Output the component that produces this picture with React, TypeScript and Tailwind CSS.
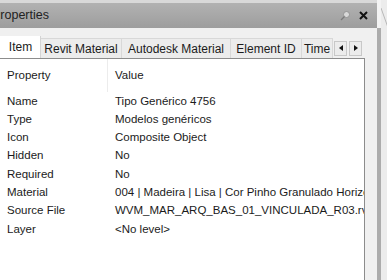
import React from "react";

const rows: [string, string][] = [
  ["Name", "Tipo Genérico 4756"],
  ["Type", "Modelos genéricos"],
  ["Icon", "Composite Object"],
  ["Hidden", "No"],
  ["Required", "No"],
  ["Material", "004 | Madeira | Lisa | Cor Pinho Granulado Horizontal"],
  ["Source File", "WVM_MAR_ARQ_BAS_01_VINCULADA_R03.rvt"],
  ["Layer", "<No level>"],
];

const tabs = [
  { label: "Item", w: "w-[42px]", selected: true },
  { label: "Revit Material", w: "w-[81px]" },
  { label: "Autodesk Material", w: "w-[109px]" },
  { label: "Element ID", w: "w-[71px]" },
  { label: "Time", w: "w-[31px]" },
];

export default function App() {
  return (
    <div
      className="w-[387px] h-[280px] overflow-hidden flex bg-[#f3f3f3] text-[#1b1b1b]"
      style={{ fontFamily: '"Liberation Sans", Arial, sans-serif' }}
    >
      <div className="w-[377px] min-w-0 flex flex-col shrink-0 overflow-hidden">
        <div className="h-[3px] bg-[#d9d9d9]" />
        <div className="h-[25px] flex items-center bg-gradient-to-b from-[#b2b2b2] to-[#9d9d9d] pr-[9px]">
          <span className="ml-[-8px] text-[12.5px] text-[#222]">Properties</span>
          <div className="flex-1" />
          <svg width="10" height="10" viewBox="0 0 10 10" className="mr-[9px]">
            <circle cx="6.5" cy="3.5" r="3" fill="#d8d8d8" stroke="#8a8a8a" strokeWidth="0.8" />
            <line x1="4.5" y1="5.5" x2="1" y2="9" stroke="#7a7a7a" strokeWidth="1.2" />
          </svg>
          <svg width="9" height="9" viewBox="0 0 9 9">
            <path d="M1 1L8 8M8 1L1 8" stroke="#111" strokeWidth="2" />
          </svg>
        </div>
        <div className="flex-1 min-h-0 flex bg-[#f0f0f0]">
          <div className="flex-1 min-w-0 flex flex-col pt-[8px]">
            <div className="h-[22px] flex items-end mr-[10px]">
              {tabs.map((t) => (
                <div
                  key={t.label}
                  className={
                    t.selected
                      ? `${t.w} h-[22px] bg-white border-r border-[#d4d4d4] ml-[-1px] flex items-center justify-center pl-[2px] text-[12px] shrink-0`
                      : `${t.w} h-[20px] bg-[#ececec] border-t border-r border-[#d8d8d8] flex items-center justify-center text-[12px] overflow-hidden whitespace-nowrap shrink-0`
                  }
                >
                  {t.label}
                </div>
              ))}
              <div className="flex h-[20px] items-center gap-[2px] ml-[1px]">
                <div className="w-[13px] h-[15px] border border-[#c8c8c8] bg-[#ececec] flex items-center justify-center">
                  <svg width="4" height="6" viewBox="0 0 4 6">
                    <path d="M4 0L0 3L4 6Z" fill="#111" />
                  </svg>
                </div>
                <div className="w-[13px] h-[15px] border border-[#c8c8c8] bg-[#ececec] flex items-center justify-center">
                  <svg width="4" height="6" viewBox="0 0 4 6">
                    <path d="M0 0L4 3L0 6Z" fill="#111" />
                  </svg>
                </div>
              </div>
            </div>
            <div className="flex-1 min-w-0 ml-[-1px] mr-[12px] bg-white border border-[#8c8c8c] border-b-0 overflow-hidden text-[11.5px]">
              <div className="h-[33px] flex items-center">
                <div className="w-[108px] shrink-0 pl-[7px] h-full flex items-center border-r border-[#ececec]">
                  Property
                </div>
                <div className="pl-[7px]">Value</div>
              </div>
              {rows.map(([k, v]) => (
                <div key={k} className="h-[18.3px] flex items-center whitespace-nowrap">
                  <div className="w-[108px] shrink-0 pl-[7px]">{k}</div>
                  <div className="pl-[7px]">{v}</div>
                </div>
              ))}
            </div>
          </div>
        </div>
      </div>
      <div className="w-[4px] flex flex-col shrink-0">
        <div className="h-[28px] bg-[#f3f3f3]" />
        <div className="flex-1 bg-[#acacac]" />
      </div>
      <div className="flex-1 bg-[#ececec]">
        <svg width="10" height="280" viewBox="0 0 10 280">
          <line x1="0" y1="8" x2="10" y2="36" stroke="#b8b8b8" strokeWidth="1" />
        </svg>
      </div>
    </div>
  );
}
